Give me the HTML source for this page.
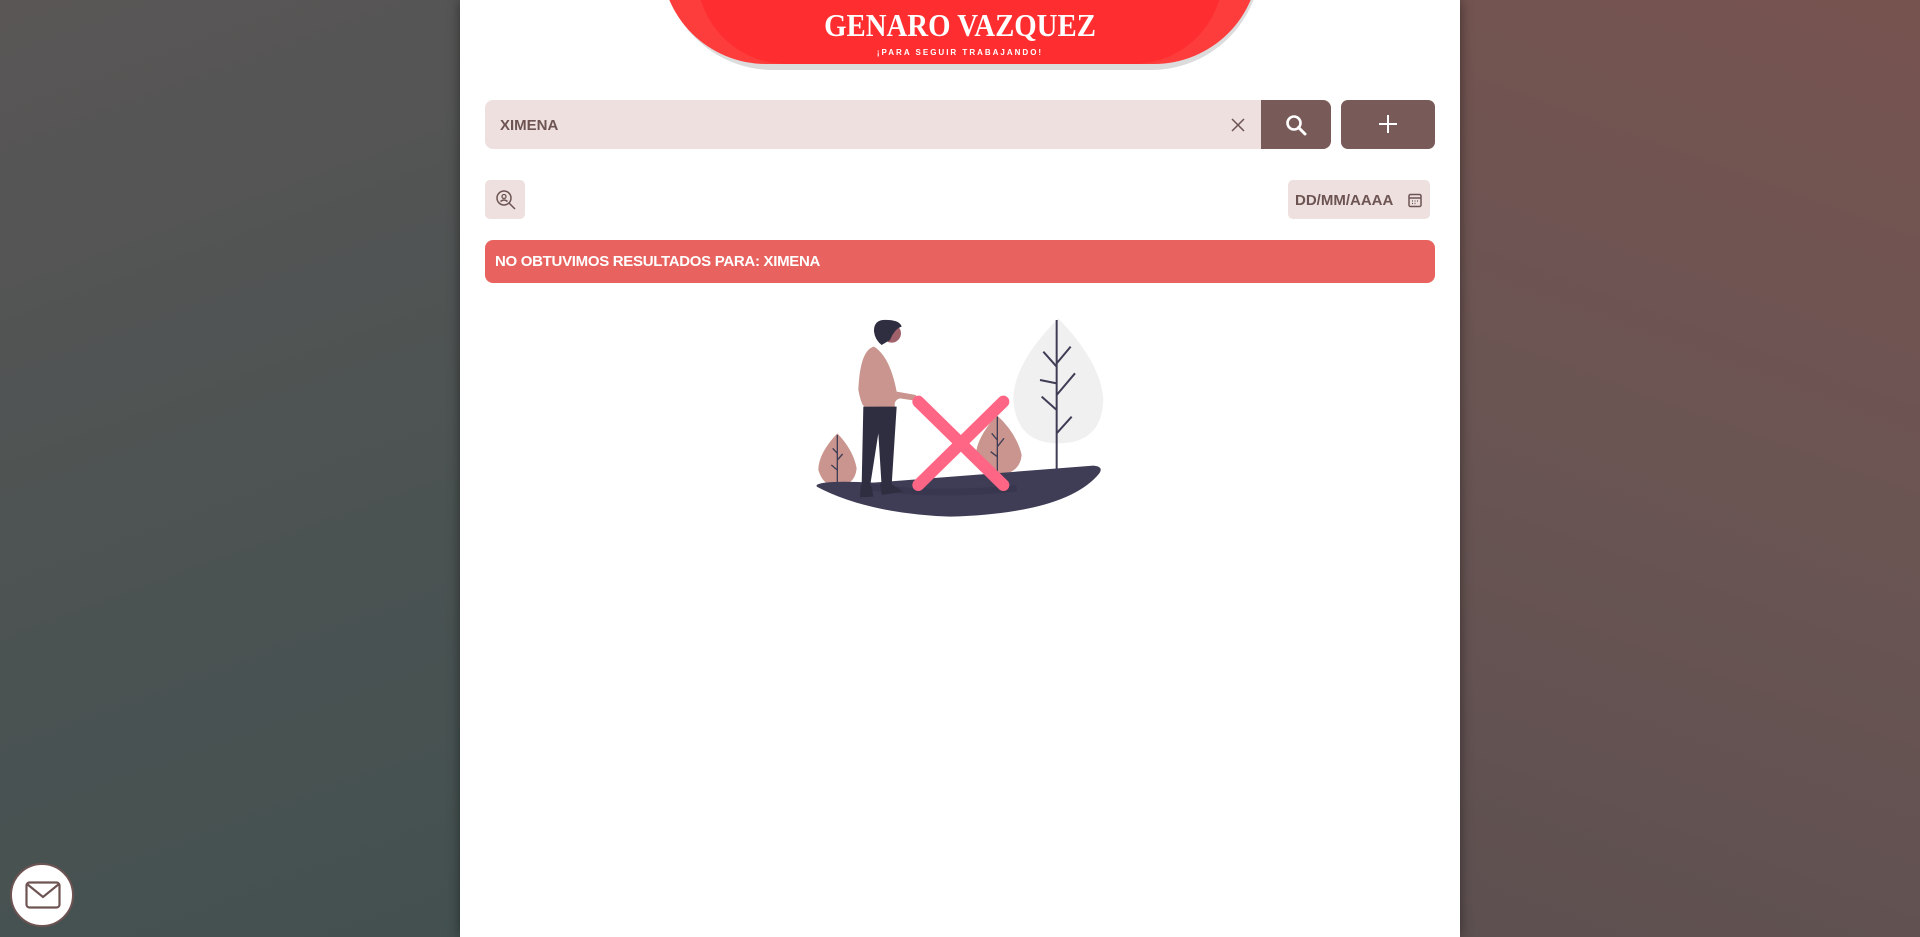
<!DOCTYPE html>
<html><head><meta charset="utf-8"><style>
*{box-sizing:border-box;margin:0;padding:0}
body{width:1920px;height:937px;overflow:hidden;font-family:"Liberation Sans",sans-serif;
background:linear-gradient(160deg,#5a5656 0%,#4b5352 40%,#3a4d4e 100%);position:relative}
.right{position:absolute;left:1460px;top:0;width:460px;height:937px;background:linear-gradient(200deg,#77534f 0%,#6a5553 50%,#5d5050 100%)}
.panel{position:absolute;left:460px;top:0;width:1000px;height:937px;background:#fff;box-shadow:0 0 12px rgba(0,0,0,.45)}
.hdrsh{position:absolute;left:663px;top:-60px;width:598px;height:130px;background:#dcdcdc;border-radius:0 0 110px 110px}
.hdr{position:absolute;left:661px;top:-60px;width:598px;height:124px;background:#fd3c3c;border-radius:0 0 105px 105px;overflow:hidden}
.hdr .in{position:absolute;left:36px;right:36px;top:0;bottom:0;background:#fe2e30;border-radius:0 0 90px 90px}
.t1{position:absolute;left:661px;width:598px;top:7px;text-align:center;color:#fff;font-family:"Liberation Serif",serif;font-weight:bold;font-size:32px;letter-spacing:0px;transform:scaleX(.9)}
.t2{position:absolute;left:661px;width:598px;top:48px;text-align:center;color:#fff;font-size:8px;letter-spacing:2px;font-weight:bold}
.search{position:absolute;left:485px;top:100px;width:846px;height:49px;background:#ede0df;border-radius:8px;overflow:hidden}
.search span{position:absolute;left:15px;top:17px;font-size:15px;font-weight:bold;color:#6d5452}
.sbtn{position:absolute;right:0;top:0;width:70px;height:49px;background:#785a58}
.plus{position:absolute;left:1341px;top:100px;width:94px;height:49px;background:#785a58;border-radius:7px}
.ib{position:absolute;left:485px;top:180px;width:40px;height:39px;background:#ede0df;border-radius:5px}
.date{position:absolute;left:1288px;top:180px;width:142px;height:39px;background:#ede0df;border-radius:5px;font-size:15px;font-weight:bold;color:#6d5452;padding:12px 0 0 7px}
.alert{position:absolute;left:485px;top:240px;width:950px;height:43px;background:#e8635f;border-radius:8px;color:#fff;font-size:15px;font-weight:bold;padding:13px 0 0 10px;letter-spacing:-.3px}
.mail{position:absolute;left:10px;top:863px;width:64px;height:64px;border-radius:50%;background:#fff;border:2px solid #6d5452}
</style></head><body>
<div class="right"></div>
<div class="panel"></div>
<div class="hdrsh"></div>
<div class="hdr"><div class="in"></div></div>
<div class="t1">GENARO VAZQUEZ</div>
<div class="t2">¡PARA SEGUIR TRABAJANDO!</div>
<div class="search"><span>XIMENA</span>
<svg style="position:absolute;left:746px;top:18px" width="14" height="14" viewBox="0 0 14 14"><path d="M1 1L13 13M13 1L1 13" stroke="#6d5452" stroke-width="1.5"/></svg>
<div class="sbtn"><svg style="position:absolute;left:24px;top:14px" width="22" height="22" viewBox="0 0 22 22"><circle cx="9" cy="9" r="6.5" fill="none" stroke="#fff" stroke-width="2.6"/><path d="M13.5 13.5L20 20" stroke="#fff" stroke-width="3" stroke-linecap="round"/></svg></div></div>
<div class="plus"><svg style="position:absolute;left:37px;top:14px" width="20" height="20" viewBox="0 0 20 20"><path d="M10 1V19M1 10H19" stroke="#fff" stroke-width="2"/></svg></div>
<div class="ib"><svg style="position:absolute;left:10px;top:9px" width="22" height="22" viewBox="0 0 22 22"><circle cx="9" cy="9" r="7" fill="none" stroke="#6d5452" stroke-width="1.5"/><circle cx="9" cy="7.5" r="2" fill="none" stroke="#6d5452" stroke-width="1.3"/><path d="M5.5 12.5Q9 9.5 12.5 12.5M14 14L20 20" stroke="#6d5452" stroke-width="1.5" fill="none"/></svg></div>
<div class="date">DD/MM/AAAA<svg style="position:absolute;left:120px;top:13px" width="14" height="15" viewBox="0 0 14 15"><rect x="1" y="1.5" width="12" height="12" rx="1.5" fill="none" stroke="#6d5452" stroke-width="1.5"/><path d="M1 5H13" stroke="#6d5452" stroke-width="1.5"/><path d="M4 8h1M6.5 8h1M9 8h1M4 10.5h1M6.5 10.5h1" stroke="#6d5452" stroke-width="1.3"/></svg></div>
<div class="alert">NO OBTUVIMOS RESULTADOS PARA: XIMENA</div>
<svg style="position:absolute;left:800px;top:300px" width="320" height="230" viewBox="0 0 960 690">
<path d="M775 55Q640 190 640 300Q650 430 775 430Q905 430 910 300Q905 190 775 55Z" fill="#f0f0f0"/>
<path d="M770 60V510M770 200L730 155M770 190L812 140M770 250L720 240M770 285L825 220M770 330L725 290M770 400L815 350" stroke="#3f3d56" stroke-width="6"/>
<path d="M590 345Q525 420 528 470Q540 525 595 525Q660 520 665 465Q650 400 590 345Z" fill="#c9958e"/>
<path d="M592 350V525M592 420L575 400M592 440L612 415M592 470L572 455" stroke="#3f3d56" stroke-width="4"/>
<path d="M112 400Q55 460 55 510Q70 560 112 560Q165 555 170 505Q160 450 112 400Z" fill="#c9958e"/>
<path d="M112 405V565M112 460L98 445M112 480L128 462M112 510L94 495" stroke="#3f3d56" stroke-width="4"/>
<path d="M50 555Q70 540 220 548L880 497Q912 500 898 520Q800 640 450 650Q200 640 50 560Z" fill="#3f3d56"/>
<path d="M200 560Q400 590 650 565" stroke="#34324a" stroke-width="20" fill="none" opacity=".5"/>
<path d="M222 140Q180 150 175 270Q185 320 195 320L285 322Q280 300 300 295L345 302L348 285L290 275Q270 170 222 140Z" fill="#c9958e"/>
<path d="M190 320L185 555L210 560L235 400L245 560L275 555L290 320Z" fill="#2f2e41"/>
<path d="M182 555L215 558L220 590L180 592ZM240 550L275 552L310 575L245 585Z" fill="#2f2e41"/>
<circle cx="275" cy="100" r="28" fill="#a0616a"/>
<path d="M222 95Q220 55 265 60Q300 62 305 80Q285 85 270 120L245 135Q225 120 222 95Z" fill="#2f2e41"/>
<path d="M355 305L610 555M610 305L355 555" stroke="#ff6584" stroke-width="36" stroke-linecap="round"/>
</svg>
<div class="mail"><svg style="position:absolute;left:13px;top:16px" width="36" height="28" viewBox="0 0 36 28"><rect x="1.5" y="1.5" width="33" height="25" rx="3" fill="none" stroke="#6d5452" stroke-width="2.2"/><path d="M2 3L18 16L34 3" fill="none" stroke="#6d5452" stroke-width="2.2"/></svg></div>
</body></html>
